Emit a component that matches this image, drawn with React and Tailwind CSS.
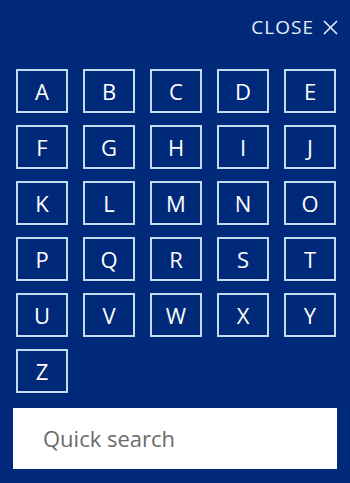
import React from 'react';

const letters = 'ABCDEFGHIJKLMNOPQRSTUVWXYZ'.split('');

export default function App() {
  return (
    <div
      className="w-[350px] h-[483px] bg-[#01297a] text-white overflow-hidden"
      style={{ fontFamily: '"Open Sans", "Noto Sans", sans-serif' }}
    >
      {/* Header */}
      <div className="flex justify-end items-center pt-[16px] pr-[12px] h-[38px]">
        <button className="flex items-center gap-[9px] text-[19px] leading-[22px] text-[#e6f0fa] tracking-[1px]">
          <span>CLOSE</span>
          <svg width="15" height="15" viewBox="0 0 15 15" className="mt-[1px]">
            <path d="M1 1 L14 14 M14 1 L1 14" stroke="#e6f0fa" strokeWidth="1.6" fill="none" />
          </svg>
        </button>
      </div>

      {/* Letter grid */}
      <div className="grid grid-cols-[repeat(5,52px)] gap-x-[15px] gap-y-[12px] pl-[16px] mt-[31px]">
        {letters.map((l) => (
          <button
            key={l}
            className="h-[44px] w-[52px] border-2 border-[#c3dbee] flex items-center justify-center text-[22px] leading-none text-white"
          >
            {l}
          </button>
        ))}
      </div>

      {/* Search */}
      <div className="mx-[13px] mt-[15px] h-[61px] bg-white flex items-center pl-[30px]">
        <span className="text-[22px] text-[#6b6b6b]">Quick search</span>
      </div>
    </div>
  );
}
